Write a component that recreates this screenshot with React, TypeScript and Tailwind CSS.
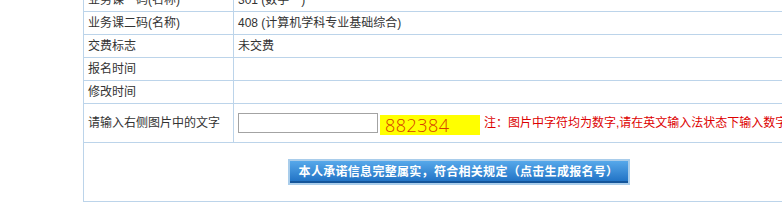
const font = { fontFamily: '"Liberation Sans", "Noto Sans CJK SC", sans-serif' };

const rows: [string, string][] = [
  ['业务课一码(名称)', '301 (数学一)'],
  ['业务课二码(名称)', '408 (计算机学科专业基础综合)'],
  ['交费标志', '未交费'],
  ['报名时间', ''],
  ['修改时间', ''],
];

export default function App() {
  return (
    <div className="w-[782px] h-[216px] overflow-hidden bg-white text-[12px] text-[#333]" style={font}>
      <div className="ml-[83px] mt-[-11px] w-[751px] border-l border-r border-[#bcd4ea]">
        {rows.map(([label, value]) => (
          <div key={label} className="flex h-[23px] border-b border-[#bcd4ea]">
            <div className="w-[150px] shrink-0 border-r border-[#bcd4ea] pl-1 flex items-center">{label}</div>
            <div className="pl-1 flex items-center">{value}</div>
          </div>
        ))}

        {/* captcha row */}
        <div className="flex h-[39px] border-b border-[#bcd4ea]">
          <div className="w-[150px] shrink-0 border-r border-[#bcd4ea] pl-1 flex items-center">
            请输入右侧图片中的文字
          </div>
          <div className="pl-1 flex items-center">
            <input
              type="text"
              className="w-[140px] h-[20px] border border-[#a3a3a3] bg-white outline-none"
            />
            <div
              className="ml-[2px] mt-[3px] w-[100px] h-[20px] bg-[#ffff00] text-[#d63c00] text-[18px] leading-[20px] pl-[5px] font-light tracking-[0.5px]"
              style={{ fontFamily: '"Open Sans", sans-serif' }}
            >
              882384
            </div>
            <span className="ml-1 whitespace-nowrap text-[#dd0000]">
              注：图片中字符均为数字,请在英文输入法状态下输入数字
            </span>
          </div>
        </div>

        {/* submit */}
        <div className="h-[59px] border-b border-[#bcd4ea] flex items-center justify-center">
          <button className="w-[342px] h-[26px] border-2 border-[#a9cdeb] bg-gradient-to-b from-[#56a8ea] to-[#1c6fc2] shadow-[inset_0_-2px_0_#14559a] text-white font-bold text-[12px] tracking-[0.3px] leading-none">
            本人承诺信息完整属实，符合相关规定（点击生成报名号）
          </button>
        </div>
      </div>
    </div>
  );
}
